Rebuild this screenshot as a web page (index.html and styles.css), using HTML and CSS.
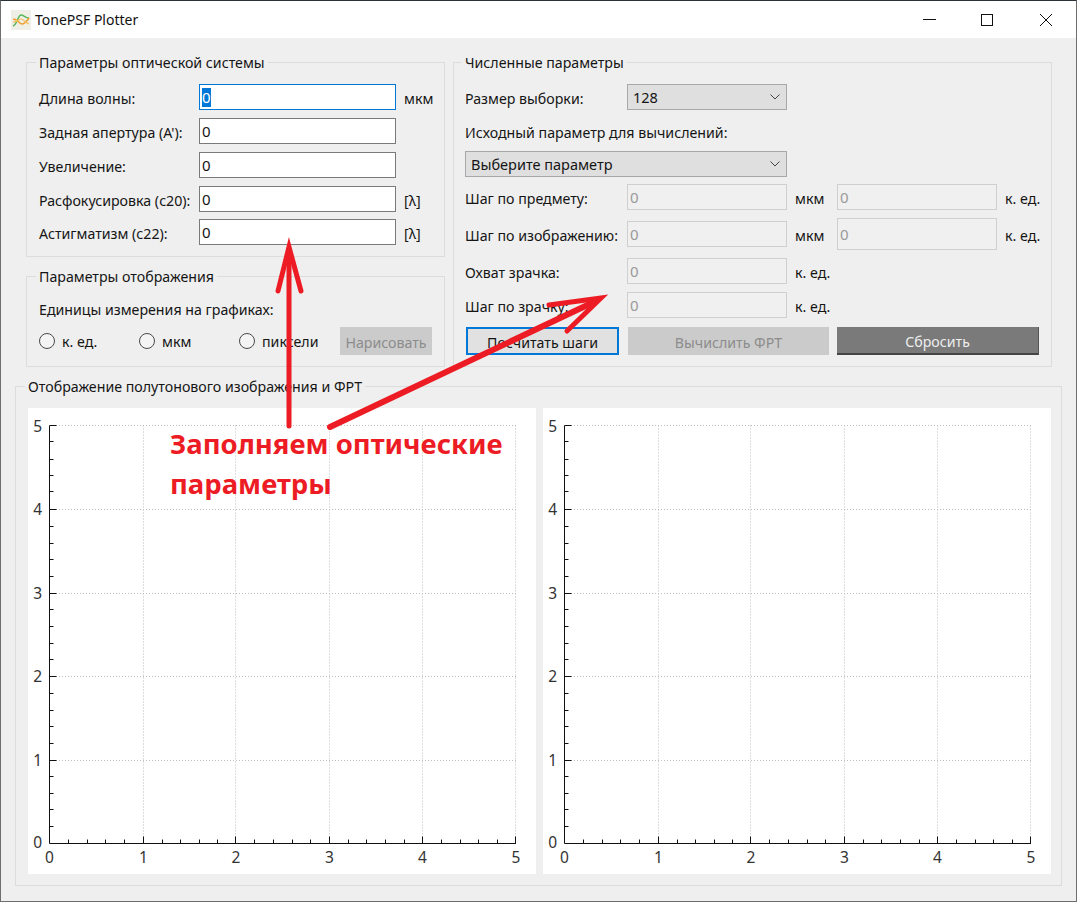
FILE: index.html
```html
<!DOCTYPE html>
<html lang="ru">

<head>
	<meta charset="utf-8">
	<title>TonePSF Plotter</title>
	<link rel="stylesheet" href="styles.css">
</head>

<body>
	<div class="window">
		<div class="titlebar">
			<svg class="app-icon" width="20" height="20" viewBox="0 0 20 20">
				<rect width="20" height="20" fill="#efefe8" />
				<path d="M2 16C6 15 7 5 10 5s4 3 8 3" fill="none" stroke="#5cb85c" stroke-width="1.6" />
				<path d="M2 9c5 0 6 5 9 5s4-2 7-6" fill="none" stroke="#f0a030" stroke-width="1.6" />
				<path d="M2 12c4 0 6-3 8-3s5 4 8 5" fill="none" stroke="#f4c060" stroke-width="1.2" />
			</svg>
			<span class="app-title">TonePSF Plotter</span>
			<div class="controls">
				<svg class="ctl" width="46" height="37" viewBox="0 0 46 37"><path d="M11 18.5h13" stroke="#111" fill="none" /></svg>
				<svg class="ctl" width="58" height="37" viewBox="0 0 58 37"><rect x="23.5" y="13.5" width="11" height="11" stroke="#111" fill="none" /></svg>
				<svg class="ctl" width="60" height="37" viewBox="0 0 60 37"><path d="M24 13l12 12M36 13L24 25" stroke="#111" fill="none" /></svg>
			</div>
		</div>

		<div class="main">
			<div class="top">
				<div class="left-col">
					<fieldset class="optics">
						<legend>Параметры оптической системы</legend>
						<div class="optics-grid">
							<label>Длина волны:</label>
							<div class="field field-focus"><span class="sel">0</span></div>
							<span class="unit">мкм</span>
							<label>Задная апертура (А'):</label>
							<input class="field" type="text" value="0">
							<span></span>
							<label>Увеличение:</label>
							<input class="field" type="text" value="0">
							<span></span>
							<label>Расфокусировка (с20):</label>
							<input class="field" type="text" value="0">
							<span class="unit">[λ]</span>
							<label class="tight">Астигматизм (с22):</label>
							<input class="field tight" type="text" value="0">
							<span class="unit tight">[λ]</span>
						</div>
					</fieldset>

					<fieldset class="display">
						<legend>Параметры отображения</legend>
						<div class="display-title">Единицы измерения на графиках:</div>
						<div class="radios">
							<label class="radio"><input type="radio" name="units">к. ед.</label>
							<label class="radio"><input type="radio" name="units">мкм</label>
							<label class="radio"><input type="radio" name="units">пиксели</label>
							<button class="btn btn-off btn-draw" type="button">Нарисовать</button>
						</div>
					</fieldset>
				</div>

				<fieldset class="numeric">
					<legend>Численные параметры</legend>
					<div class="numeric-grid">
						<label>Размер выборки:</label>
						<div class="combo">128
							<svg width="10" height="6" viewBox="0 0 10 6"><path d="M.5.5L5 5 9.5.5" fill="none" stroke="#444" /></svg>
						</div>
						<span class="wide"></span>

						<label class="full">Исходный параметр для вычислений:</label>

						<div class="combo combo-wide">Выберите параметр
							<svg width="10" height="6" viewBox="0 0 10 6"><path d="M.5.5L5 5 9.5.5" fill="none" stroke="#444" /></svg>
						</div>
						<span class="wide"></span>

						<label>Шаг по предмету:</label>
						<input class="field off" type="text" value="0" disabled>
						<span class="unit">мкм</span>
						<input class="field off" type="text" value="0" disabled>
						<span class="unit">к. ед.</span>

						<label>Шаг по изображению:</label>
						<input class="field off" type="text" value="0" disabled>
						<span class="unit">мкм</span>
						<input class="field off tall" type="text" value="0" disabled>
						<span class="unit">к. ед.</span>

						<label>Охват зрачка:</label>
						<input class="field off" type="text" value="0" disabled>
						<span class="unit rest">к. ед.</span>

						<label>Шаг по зрачку:</label>
						<input class="field off" type="text" value="0" disabled>
						<span class="unit rest">к. ед.</span>

						<div class="buttons">
							<button class="btn btn-focus" type="button">Посчитать шаги</button>
							<button class="btn btn-off btn-calc" type="button">Вычислить ФРТ</button>
							<button class="btn btn-dark" type="button">Сбросить</button>
						</div>
					</div>
				</fieldset>
			</div>

			<fieldset class="plots">
				<legend>Отображение полутонового изображения и ФРТ</legend>
				<div class="plot-row">
					<svg class="plot" width="508" height="466" viewBox="0 0 508 466">
						<path class="grid" d="M115.5 17.5V435M207.5 17.5V435M301.5 17.5V435M394.5 17.5V435M487.5 17.5V435M22 17.5H488M22 101.5H488M22 185.5H488M22 268.5H488M22 352.5H488" />
						<path class="axis" d="M21.5 17.5V435.5H488" />
						<path class="axis" d="M21.5 17.5h7M21.5 101.5h7M21.5 185.5h7M21.5 268.5h7M21.5 352.5h7M115.5 435.5v-7M207.5 435.5v-7M301.5 435.5v-7M394.5 435.5v-7M487.5 435.5v-7" />
						<path class="axis" d="M21.5 33.5h4M21.5 51.5h4M21.5 67.5h4M21.5 83.5h4M21.5 118.5h4M21.5 135.5h4M21.5 151.5h4M21.5 168.5h4M21.5 201.5h4M21.5 218.5h4M21.5 235.5h4M21.5 251.5h4M21.5 285.5h4M21.5 302.5h4M21.5 318.5h4M21.5 335.5h4M21.5 368.5h4M21.5 385.5h4M21.5 401.5h4M21.5 418.5h4" />
						<path class="axis" d="M40.5 435.5v-4M59.5 435.5v-4M77.5 435.5v-4M96.5 435.5v-4M134.5 435.5v-4M152.5 435.5v-4M171.5 435.5v-4M189.5 435.5v-4M226.5 435.5v-4M245.5 435.5v-4M264.5 435.5v-4M282.5 435.5v-4M320.5 435.5v-4M338.5 435.5v-4M357.5 435.5v-4M376.5 435.5v-4M413.5 435.5v-4M432.5 435.5v-4M450.5 435.5v-4M469.5 435.5v-4" />
						<g class="ylabels">
							<text x="14" y="24">5</text>
							<text x="14" y="107">4</text>
							<text x="14" y="191">3</text>
							<text x="14" y="274">2</text>
							<text x="14" y="358">1</text>
							<text x="14" y="440">0</text>
						</g>
						<g class="xlabels">
							<text x="21.5" y="455">0</text>
							<text x="115.5" y="455">1</text>
							<text x="208" y="455">2</text>
							<text x="301.5" y="455">3</text>
							<text x="394.5" y="455">4</text>
							<text x="488" y="455">5</text>
						</g>
					</svg>
					<svg class="plot" width="508" height="466" viewBox="0 0 508 466">
						<path class="grid" d="M115.5 17.5V435M207.5 17.5V435M301.5 17.5V435M394.5 17.5V435M487.5 17.5V435M22 17.5H488M22 101.5H488M22 185.5H488M22 268.5H488M22 352.5H488" />
						<path class="axis" d="M21.5 17.5V435.5H488" />
						<path class="axis" d="M21.5 17.5h7M21.5 101.5h7M21.5 185.5h7M21.5 268.5h7M21.5 352.5h7M115.5 435.5v-7M207.5 435.5v-7M301.5 435.5v-7M394.5 435.5v-7M487.5 435.5v-7" />
						<path class="axis" d="M21.5 33.5h4M21.5 51.5h4M21.5 67.5h4M21.5 83.5h4M21.5 118.5h4M21.5 135.5h4M21.5 151.5h4M21.5 168.5h4M21.5 201.5h4M21.5 218.5h4M21.5 235.5h4M21.5 251.5h4M21.5 285.5h4M21.5 302.5h4M21.5 318.5h4M21.5 335.5h4M21.5 368.5h4M21.5 385.5h4M21.5 401.5h4M21.5 418.5h4" />
						<path class="axis" d="M40.5 435.5v-4M59.5 435.5v-4M77.5 435.5v-4M96.5 435.5v-4M134.5 435.5v-4M152.5 435.5v-4M171.5 435.5v-4M189.5 435.5v-4M226.5 435.5v-4M245.5 435.5v-4M264.5 435.5v-4M282.5 435.5v-4M320.5 435.5v-4M338.5 435.5v-4M357.5 435.5v-4M376.5 435.5v-4M413.5 435.5v-4M432.5 435.5v-4M450.5 435.5v-4M469.5 435.5v-4" />
						<g class="ylabels">
							<text x="14" y="24">5</text>
							<text x="14" y="107">4</text>
							<text x="14" y="191">3</text>
							<text x="14" y="274">2</text>
							<text x="14" y="358">1</text>
							<text x="14" y="440">0</text>
						</g>
						<g class="xlabels">
							<text x="21.5" y="455">0</text>
							<text x="115.5" y="455">1</text>
							<text x="208" y="455">2</text>
							<text x="301.5" y="455">3</text>
							<text x="394.5" y="455">4</text>
							<text x="488" y="455">5</text>
						</g>
					</svg>
				</div>
			</fieldset>
		</div>

		<!-- annotation drawn over the screenshot -->
		<svg class="arrows" width="1077" height="902" viewBox="0 0 1077 902">
			<g fill="none" stroke="#ed1c24" stroke-width="5" stroke-linecap="round">
				<path d="M289 426V250" />
				<path d="M278 291L289 247 301 291" />
				<path stroke-width="6" d="M330 427L596 301" />
				<path d="M549 305L601 298 567 331" />
			</g>
		</svg>
		<div class="note">Заполняем оптические<br>параметры</div>
	</div>
</body>

</html>
```

FILE: styles.css
```css
* { box-sizing: border-box; }
html, body { margin: 0; padding: 0; }
body { font-family: "Noto Sans", "Liberation Sans", sans-serif; font-size: 14.2px; color: #151515; background: #efefef; }

.window { position: relative; width: 1077px; height: 902px; overflow: hidden; background: #efefef; border: 1px solid #6e6e6e; border-top-color: #2a3138; }

.titlebar { display: flex; align-items: center; height: 37px; padding-left: 10px; background: #fff; }
.app-icon { margin-right: 4px; }
.app-title { font-size: 14px; color: #111; }
.controls { display: flex; margin-left: auto; }
.ctl { display: block; }

fieldset { min-width: 0; margin: 0; border: 1px solid #dcdcdc; }
legend { padding: 2px 3px 0; margin-left: -3px; line-height: 18px; }

.main { padding: 0 14px; }
.top { display: flex; gap: 8px; padding: 14px 10px 0 11px; }
.left-col { display: flex; flex-direction: column; gap: 9px; width: 419px; }

.optics { height: 205px; padding: 12px 12px 0; }
.optics-grid { display: grid; grid-template-columns: 160px 197px auto; grid-auto-rows: 26px; row-gap: 8px; align-items: center; white-space: nowrap; }
.optics-grid label { padding-top: 3px; }
.optics-grid .unit { padding: 3px 0 0 8px; }
.optics-grid .tight { margin-top: -2px; }

.field { display: block; width: 100%; height: 26px; padding: 0 2px; font: inherit; font-size: 15px; color: #151515; background: #fff; border: 1px solid #7a7a7a; border-radius: 0; outline: 0; line-height: 24px; }
.field-focus { display: flex; align-items: center; border-color: #0078d7; }
.sel { height: 19px; line-height: 19px; color: #fff; background: #0078d7; }
.off { color: #9a9a9a; background: #f0f0f0; border-color: #cfcfcf; }
.tall { height: 32px; margin: -3px 0; }

.display { height: 101px; padding: 11px 12px 0; }
.display-title { line-height: 26px; }
.radios { display: flex; align-items: center; height: 28px; margin-top: 4px; }
.radio { display: flex; align-items: center; gap: 7px; width: 100px; }
.radio input { appearance: none; width: 16px; height: 16px; margin: 0; background: #f4f4f4; border: 1px solid #4a4a4a; border-radius: 50%; }
.btn-draw { flex: none; width: 92px; margin-left: 1px; }

.numeric { width: 600px; height: 315px; padding: 12px 12px 0 11px; }
.numeric-grid { display: grid; grid-template-columns: 162px 160px 50px 160px auto; grid-template-rows: 26px 34px 33px 33px 37px 37px 34px 37px; align-items: end; white-space: nowrap; }
.numeric-grid label { display: flex; align-items: center; height: 26px; padding-top: 3px; }
.numeric-grid .full { grid-column: 1 / -1; }
.numeric-grid .unit { display: flex; align-items: center; height: 26px; padding: 3px 0 0 8px; }
.numeric-grid .wide { grid-column: 3 / -1; }
.numeric-grid .rest { grid-column: 3 / -1; }

.combo { display: flex; align-items: center; justify-content: space-between; height: 26px; padding: 0 6px 0 5px; font-size: 14.5px; background: #dfdfdf; border: 1px solid #a8a8a8; }
.combo-wide { grid-column: 1 / 3; }

.buttons { display: flex; grid-column: 1 / -1; gap: 8px; padding-left: 1px; }
.btn { height: 28px; padding: 2px 0 0; font: inherit; border: 0; border-radius: 0; }
.btn-focus { width: 153px; margin-right: 1px; color: #151515; background: #e1e1e1; border: 2px solid #0078d7; }
.btn-off { color: #8c8c8c; background: #cbcbcb; }
.btn-calc { width: 201px; }
.btn-dark { width: 202px; color: #eee; background: #7a7a7a; border-bottom: 2px solid #444; border-right: 1px solid #555; }

.plots { height: 510px; margin-top: 9px; padding: 12px 10px 0 12px; }
.plot-row { display: flex; gap: 7px; }
.plot { display: block; flex: none; background: #fff; font-family: "Noto Sans", "Liberation Sans", sans-serif; font-size: 15.5px; fill: #333; }
.grid { fill: none; stroke: #bdbdbd; stroke-dasharray: 1 2; }
.axis { fill: none; stroke: #111; }
.ylabels { text-anchor: end; }
.xlabels { text-anchor: middle; }

.arrows { position: absolute; top: -1px; left: -1px; pointer-events: none; }
.note { position: absolute; top: 423px; left: 169px; font-size: 27.5px; line-height: 40px; font-weight: 700; color: #ed1c24; white-space: nowrap; }
```
